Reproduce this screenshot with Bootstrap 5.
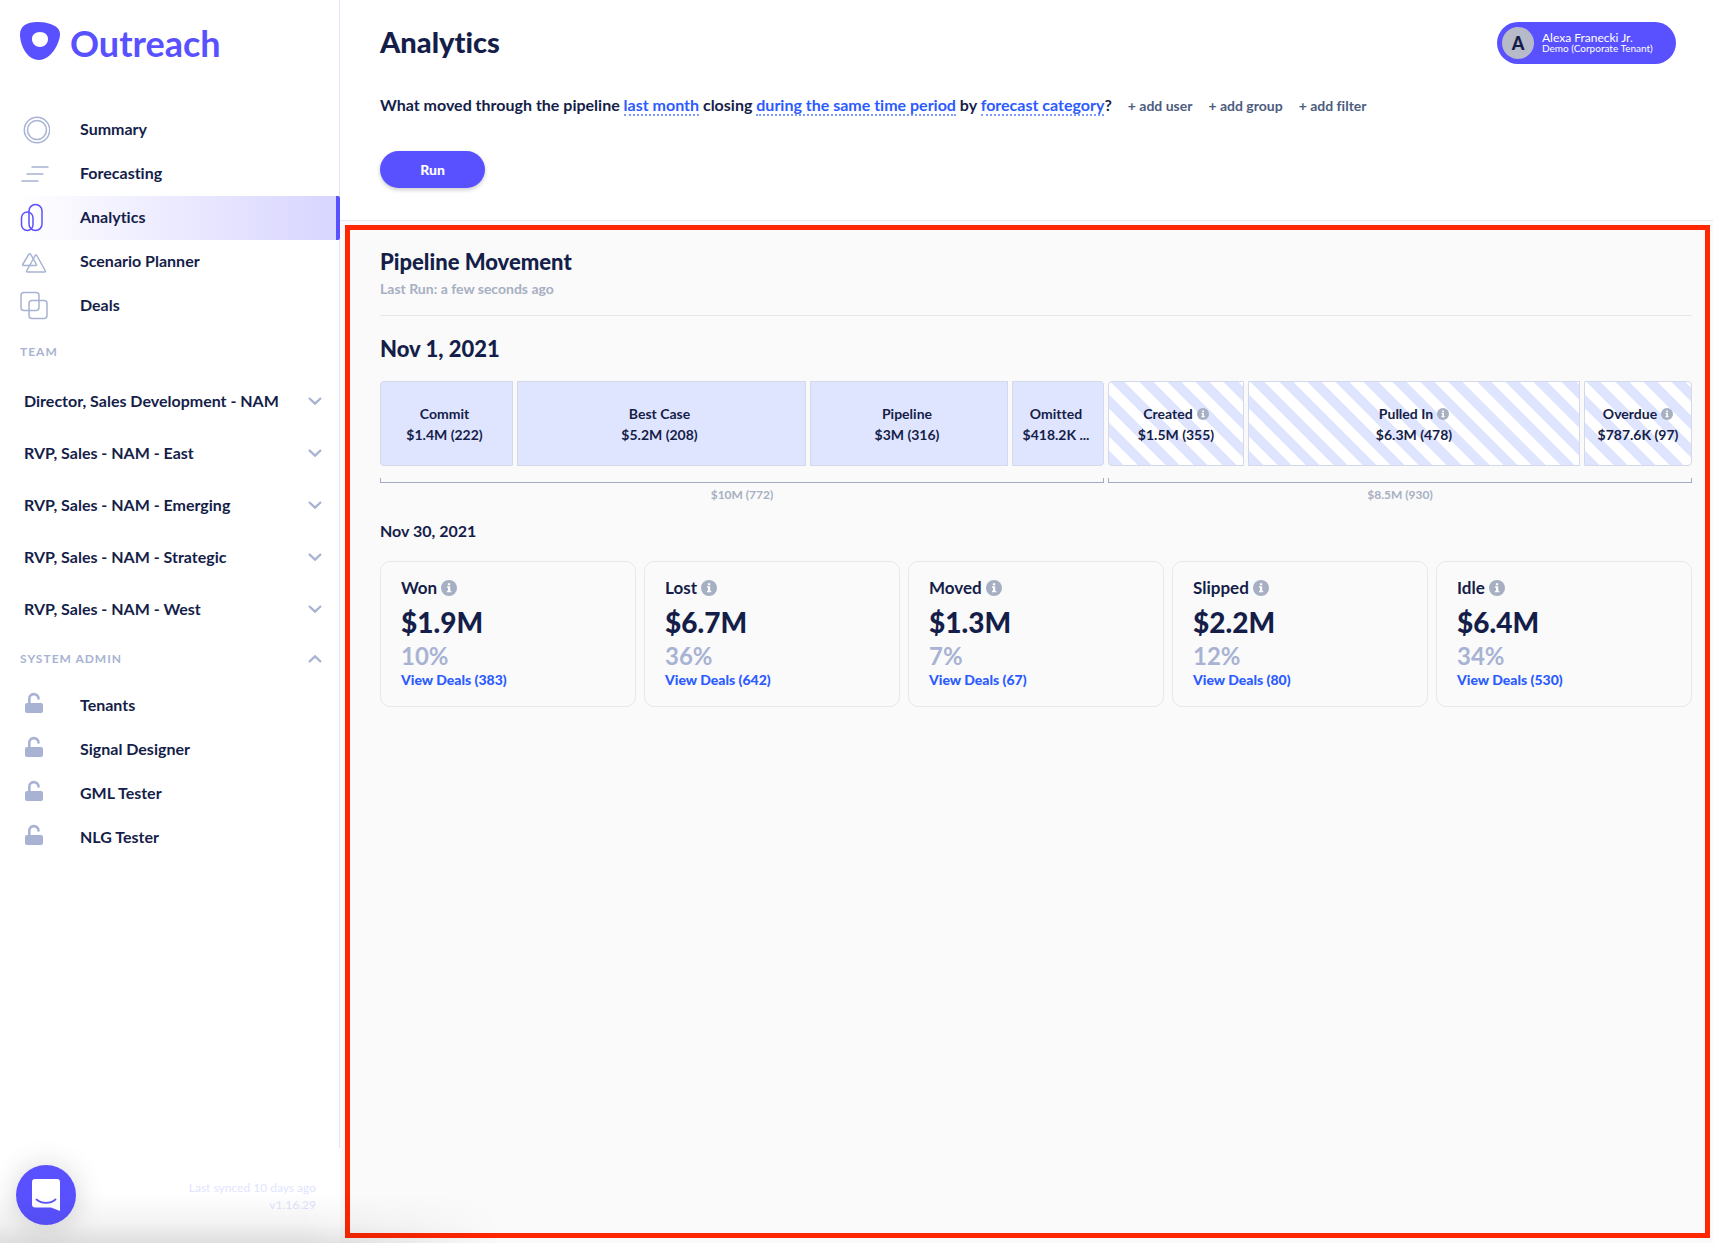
<!DOCTYPE html>
<html lang="en">
<head>
<meta charset="utf-8">
<meta name="viewport" content="width=device-width, initial-scale=1">
<title>Outreach - Analytics</title>
<link href="https://cdn.jsdelivr.net/npm/bootstrap@5.3.0/dist/css/bootstrap.min.css" rel="stylesheet">
<style>
  :root { --ink:#151e49; --brand:#5951ff; --mist:#a8b3d3; --ash:#a7afc2; --link:#2c5bff; --tint:#e0e5ff; }
  body { font-family:Lato,"Liberation Sans",sans-serif; font-size:16px; line-height:20px; font-weight:700; color:var(--ink); background:#fafafa; font-variant-ligatures:no-common-ligatures; }
  a { text-decoration:none; }
  button { font:inherit; color:inherit; font-variant-ligatures:inherit; }
  h1,h2,h3,p { margin:0; font-weight:700; }

  .side { width:340px; background:#fff; }
  .side-body { border-right:1px solid #e3e4f6; }
  .logo { padding:22px 20px 0; height:108px; color:var(--brand); gap:10px; }
  .logo-name { font-size:36px; line-height:42px; }
  .side-link { height:44px; padding:0 0 2px 20px; color:var(--ink); }
  .side-link svg { width:30px; height:30px; margin:2px 30px 0 0; fill:none; stroke:var(--mist); stroke-width:1.5; }
  .side-link.active { background:linear-gradient(90deg,#fff 5%,#d8d5ff); border-right:4px solid var(--brand); margin-right:-1px; border-radius:0 2px 2px 0; }
  .side-link.active svg { stroke:var(--brand); }
  .side-label { font-size:12px; letter-spacing:1px; color:var(--mist); padding:0 16px 0 20px; height:48px; border:0; background:none; }
  button.side-label { padding-bottom:2px; }
  .team-row { height:52px; padding:0 16px 2px 24px; border:0; background:none; text-align:left; }
  .chev { width:16px; height:16px; fill:none; stroke:var(--mist); stroke-width:2.4; }
  .side-foot { height:95px; padding:31px 24px 0; font-size:12px; line-height:17px; font-weight:400; color:var(--tint); }

  .top { background:#fff; border-bottom:1px solid #e8e8ec; padding:22px 37px 32px 40px; }
  .top h1 { font-size:29px; line-height:40px; font-weight:900; }
  .user { height:42px; width:179px; padding:0 5px; border:0; border-radius:21px; background:var(--brand); color:#fff; text-align:left; font-size:12px; line-height:11px; font-weight:400; }
  .user small { font-size:10px; display:block; }
  .avatar { width:32px; height:32px; border-radius:50%; background:#b7bac9; color:var(--ink); font-size:18px; font-weight:900; margin-right:8px; }
  .query { margin-top:31px; }
  .query a { color:var(--link); border-bottom:2px dotted #7f9bff; }
  .adder { border:0; background:none; padding:0; margin-left:16px; font-size:14px; color:#4d5c80; }
  .run { width:105px; height:37px; margin-top:35px; border-radius:19px; background:var(--brand); color:#fff; font-size:14px; font-weight:900; box-shadow:0 2px 4px rgba(0,0,0,.2); }

  .report { margin:4px 3px 5px 5px; border:5px solid #ff2600; padding:18px 13px 22px 30px; }
  .h-lg { font-size:22px; line-height:28px; font-weight:900; }
  .ran { font-size:14px; color:var(--ash); margin-top:3px; padding-bottom:16px; border-bottom:1px solid #e6e6ea; }
  .opening { margin-top:19px; }
  .closing { margin-top:18px; }
  .bands { display:grid; grid-template-columns:724fr 584fr; gap:4px; margin-top:18px; }
  .segs { display:grid; gap:4px; }
  .seg { min-width:0; height:85px; border:1px solid #d3d9ea; background:var(--tint); padding:0 12px 0 8px; font-size:14px; line-height:21px; text-align:center; white-space:nowrap; }
  .seg:first-child { border-radius:4px 0 0 4px; }
  .seg:last-child { border-radius:0 4px 4px 0; }
  .seg svg { width:12px; height:12px; margin:-2px 0 0 4px; }
  .striped .seg { padding:0 5px; background:repeating-linear-gradient(45deg,var(--tint) 0 10px,#fff 10px 20px); }
  .brace { height:5px; margin-top:12px; border:1px solid #a3abc4; border-top:0; }
  .total { font-size:12px; line-height:16px; margin-top:4px; color:var(--ash); text-align:center; }
  .tiles { display:grid; grid-template-columns:repeat(5,1fr); gap:8px; margin-top:20px; }
  .tile { border:1px solid #e8e8ec; border-radius:10px; padding:16px 20px; height:146px; }
  .tile h3 { font-size:17px; line-height:20px; }
  .tile h3 svg { width:16px; height:16px; margin:-4px 0 0 4px; }
  .sum { font-size:28px; line-height:34px; margin-top:7px; font-weight:900; }
  .pct { font-size:24px; line-height:28px; margin-top:3px; color:var(--mist); }
  .tile a { display:block; font-size:14px; line-height:18px; margin-top:1px; color:var(--link); font-weight:900; }

  .haze { position:fixed; left:0; bottom:0; width:500px; height:50px; pointer-events:none; background:linear-gradient(0deg,rgba(20,20,20,.14),rgba(20,20,20,.05) 40%,rgba(20,20,20,0)); -webkit-mask-image:linear-gradient(90deg,#000 60%,transparent); mask-image:linear-gradient(90deg,#000 60%,transparent); }
  .chat { position:fixed; left:16px; bottom:18px; width:60px; height:60px; border:0; padding:0; border-radius:50%; background:var(--brand); box-shadow:0 2px 30px rgba(0,0,0,.18); }
</style>
<script src="https://cdn.jsdelivr.net/npm/bootstrap@5.3.0/dist/js/bootstrap.bundle.min.js"></script>
</head>
<body>
<svg width="0" height="0" class="d-none">
  <symbol id="info" viewBox="0 0 16 16"><circle cx="8" cy="8" r="8" fill="#a7afc2"/><path fill="#fff" d="M6.9 3.2h2.3v2H6.9zM6 6.3h3.2v4.5h1V12.300H6v-1.500h1V7.800H6z"/></symbol>
  <symbol id="down" viewBox="0 0 16 16"><path d="M2 5l6 5.700L14 5"/></symbol>
  <symbol id="up" viewBox="0 0 16 16"><path d="M2 11l6-5.700 6 5.700"/></symbol>
  <symbol id="lock" viewBox="0 0 30 30"><rect x="5" y="12" width="18" height="10" rx="2" fill="#a8b3d3" stroke="none"/><path d="M9.300 13V8a4.600 4.600 0 0 1 9.200-.5" stroke-width="2.600" stroke-linecap="round"/></symbol>
</svg>
<div class="d-flex min-vh-100">
  <aside class="side d-flex flex-column flex-shrink-0">
    <div class="side-body flex-grow-1">
      <a href="#" class="logo d-flex align-items-start">
        <svg width="40" height="38" viewBox="0 0 40 38"><path fill="#5951ff" fill-rule="evenodd" d="M17 0C27 0 40 3 40 12c0 9-9 26-21 26C7 38 0 23 0 12.500 0 4 7 0 17 0zm3 10c-5 0-8 3-8 7s3 8 8 8 8-4 8-8-3-7-8-7z"/></svg>
        <span class="logo-name">Outreach</span>
      </a>
      <nav class="d-flex flex-column">
        <a href="#" class="side-link d-flex align-items-center"><svg viewBox="0 0 30 30"><circle cx="17" cy="15" r="12.700"/><circle cx="17" cy="15" r="9.500"/></svg>Summary</a>
        <a href="#" class="side-link d-flex align-items-center"><svg viewBox="0 0 30 30"><path stroke-linecap="round" d="M12 8h16M7 15h16M2 22h16"/></svg>Forecasting</a>
        <a href="#" class="side-link active d-flex align-items-center"><svg viewBox="0 0 30 30"><rect x="9" y="1.500" width="13" height="26" rx="6.500"/><rect x="1.500" y="9" width="11.500" height="18.500" rx="5.700"/></svg>Analytics</a>
        <a href="#" class="side-link d-flex align-items-center"><svg viewBox="0 0 30 30" stroke-linejoin="round"><path d="M9 7a1 1 0 0 1 1.500 0l6 10.500a.7.700 0 0 1-.6 1H3.300a.7.700 0 0 1-.6-1z"/><path d="M15.200 8.500a1 1 0 0 1 1.600 0L25.400 24a.7.700 0 0 1-.6 1H7.200a.7.700 0 0 1-.6-1z"/></svg>Scenario Planner</a>
        <a href="#" class="side-link d-flex align-items-center"><svg viewBox="0 0 30 30"><rect x="1" y="1.500" width="18" height="18" rx="3"/><rect x="9" y="9.500" width="18" height="18" rx="3"/></svg>Deals</a>
      </nav>
      <div class="side-label d-flex align-items-center">TEAM</div>
      <div class="d-flex flex-column">
        <button class="team-row d-flex align-items-center justify-content-between">Director, Sales Development - NAM<svg class="chev"><use href="#down"/></svg></button>
        <button class="team-row d-flex align-items-center justify-content-between">RVP, Sales - NAM - East<svg class="chev"><use href="#down"/></svg></button>
        <button class="team-row d-flex align-items-center justify-content-between">RVP, Sales - NAM - Emerging<svg class="chev"><use href="#down"/></svg></button>
        <button class="team-row d-flex align-items-center justify-content-between">RVP, Sales - NAM - Strategic<svg class="chev"><use href="#down"/></svg></button>
        <button class="team-row d-flex align-items-center justify-content-between">RVP, Sales - NAM - West<svg class="chev"><use href="#down"/></svg></button>
      </div>
      <button class="side-label w-100 d-flex align-items-center justify-content-between">SYSTEM ADMIN<svg class="chev"><use href="#up"/></svg></button>
      <nav class="d-flex flex-column">
        <a href="#" class="side-link d-flex align-items-center"><svg><use href="#lock"/></svg>Tenants</a>
        <a href="#" class="side-link d-flex align-items-center"><svg><use href="#lock"/></svg>Signal Designer</a>
        <a href="#" class="side-link d-flex align-items-center"><svg><use href="#lock"/></svg>GML Tester</a>
        <a href="#" class="side-link d-flex align-items-center"><svg><use href="#lock"/></svg>NLG Tester</a>
      </nav>
    </div>
    <div class="side-foot text-end">Last synced 10 days ago<br>v1.16.29</div>
  </aside>

  <main class="flex-grow-1 d-flex flex-column">
    <header class="top">
      <div class="d-flex justify-content-between align-items-start">
        <h1>Analytics</h1>
        <button class="user d-flex align-items-center"><span class="avatar d-flex align-items-center justify-content-center">A</span><span>Alexa Franecki Jr.<small>Demo (Corporate Tenant)</small></span></button>
      </div>
      <p class="query">What moved through the pipeline <a href="#">last month</a> closing <a href="#">during the same time period</a> by <a href="#">forecast category</a>?<button class="adder">+ add user</button><button class="adder">+ add group</button><button class="adder">+ add filter</button></p>
      <button class="btn run p-0">Run</button>
    </header>

    <section class="report flex-grow-1">
      <h2 class="h-lg">Pipeline Movement</h2>
      <p class="ran">Last Run: a few seconds ago</p>
      <h2 class="h-lg opening">Nov 1, 2021</h2>
      <div class="bands">
        <div>
          <div class="segs" style="grid-template-columns:133fr 289fr 198fr 92fr">
            <div class="seg d-flex flex-column justify-content-center"><div>Commit</div><div>$1.4M (222)</div></div>
            <div class="seg d-flex flex-column justify-content-center"><div>Best Case</div><div>$5.2M (208)</div></div>
            <div class="seg d-flex flex-column justify-content-center"><div>Pipeline</div><div>$3M (316)</div></div>
            <div class="seg d-flex flex-column justify-content-center"><div>Omitted</div><div>$418.2K ...</div></div>
          </div>
          <div class="brace"></div>
          <div class="total">$10M (772)</div>
        </div>
        <div>
          <div class="segs striped" style="grid-template-columns:136fr 332fr 108fr">
            <div class="seg d-flex flex-column justify-content-center"><div>Created<svg><use href="#info"/></svg></div><div>$1.5M (355)</div></div>
            <div class="seg d-flex flex-column justify-content-center"><div>Pulled In<svg><use href="#info"/></svg></div><div>$6.3M (478)</div></div>
            <div class="seg d-flex flex-column justify-content-center"><div>Overdue<svg><use href="#info"/></svg></div><div>$787.6K (97)</div></div>
          </div>
          <div class="brace"></div>
          <div class="total">$8.5M (930)</div>
        </div>
      </div>
      <p class="closing">Nov 30, 2021</p>
      <div class="tiles">
        <div class="tile"><h3>Won<svg><use href="#info"/></svg></h3><div class="sum">$1.9M</div><div class="pct">10%</div><a href="#">View Deals (383)</a></div>
        <div class="tile"><h3>Lost<svg><use href="#info"/></svg></h3><div class="sum">$6.7M</div><div class="pct">36%</div><a href="#">View Deals (642)</a></div>
        <div class="tile"><h3>Moved<svg><use href="#info"/></svg></h3><div class="sum">$1.3M</div><div class="pct">7%</div><a href="#">View Deals (67)</a></div>
        <div class="tile"><h3>Slipped<svg><use href="#info"/></svg></h3><div class="sum">$2.2M</div><div class="pct">12%</div><a href="#">View Deals (80)</a></div>
        <div class="tile"><h3>Idle<svg><use href="#info"/></svg></h3><div class="sum">$6.4M</div><div class="pct">34%</div><a href="#">View Deals (530)</a></div>
      </div>
    </section>
  </main>
</div>
<button class="chat" aria-label="Open chat"><svg width="60" height="60" viewBox="0 0 60 60"><path fill="#fff" d="M19 14h22a3 3 0 0 1 3 3v29l-9-3.500H19a3 3 0 0 1-3-3V17a3 3 0 0 1 3-3z"/><path d="M20.500 34.500c5.500 4.500 13.500 4.500 19 0" fill="none" stroke="#5951ff" stroke-width="1.800" stroke-linecap="round"/></svg></button>
<div class="haze"></div>
</body>
</html>
